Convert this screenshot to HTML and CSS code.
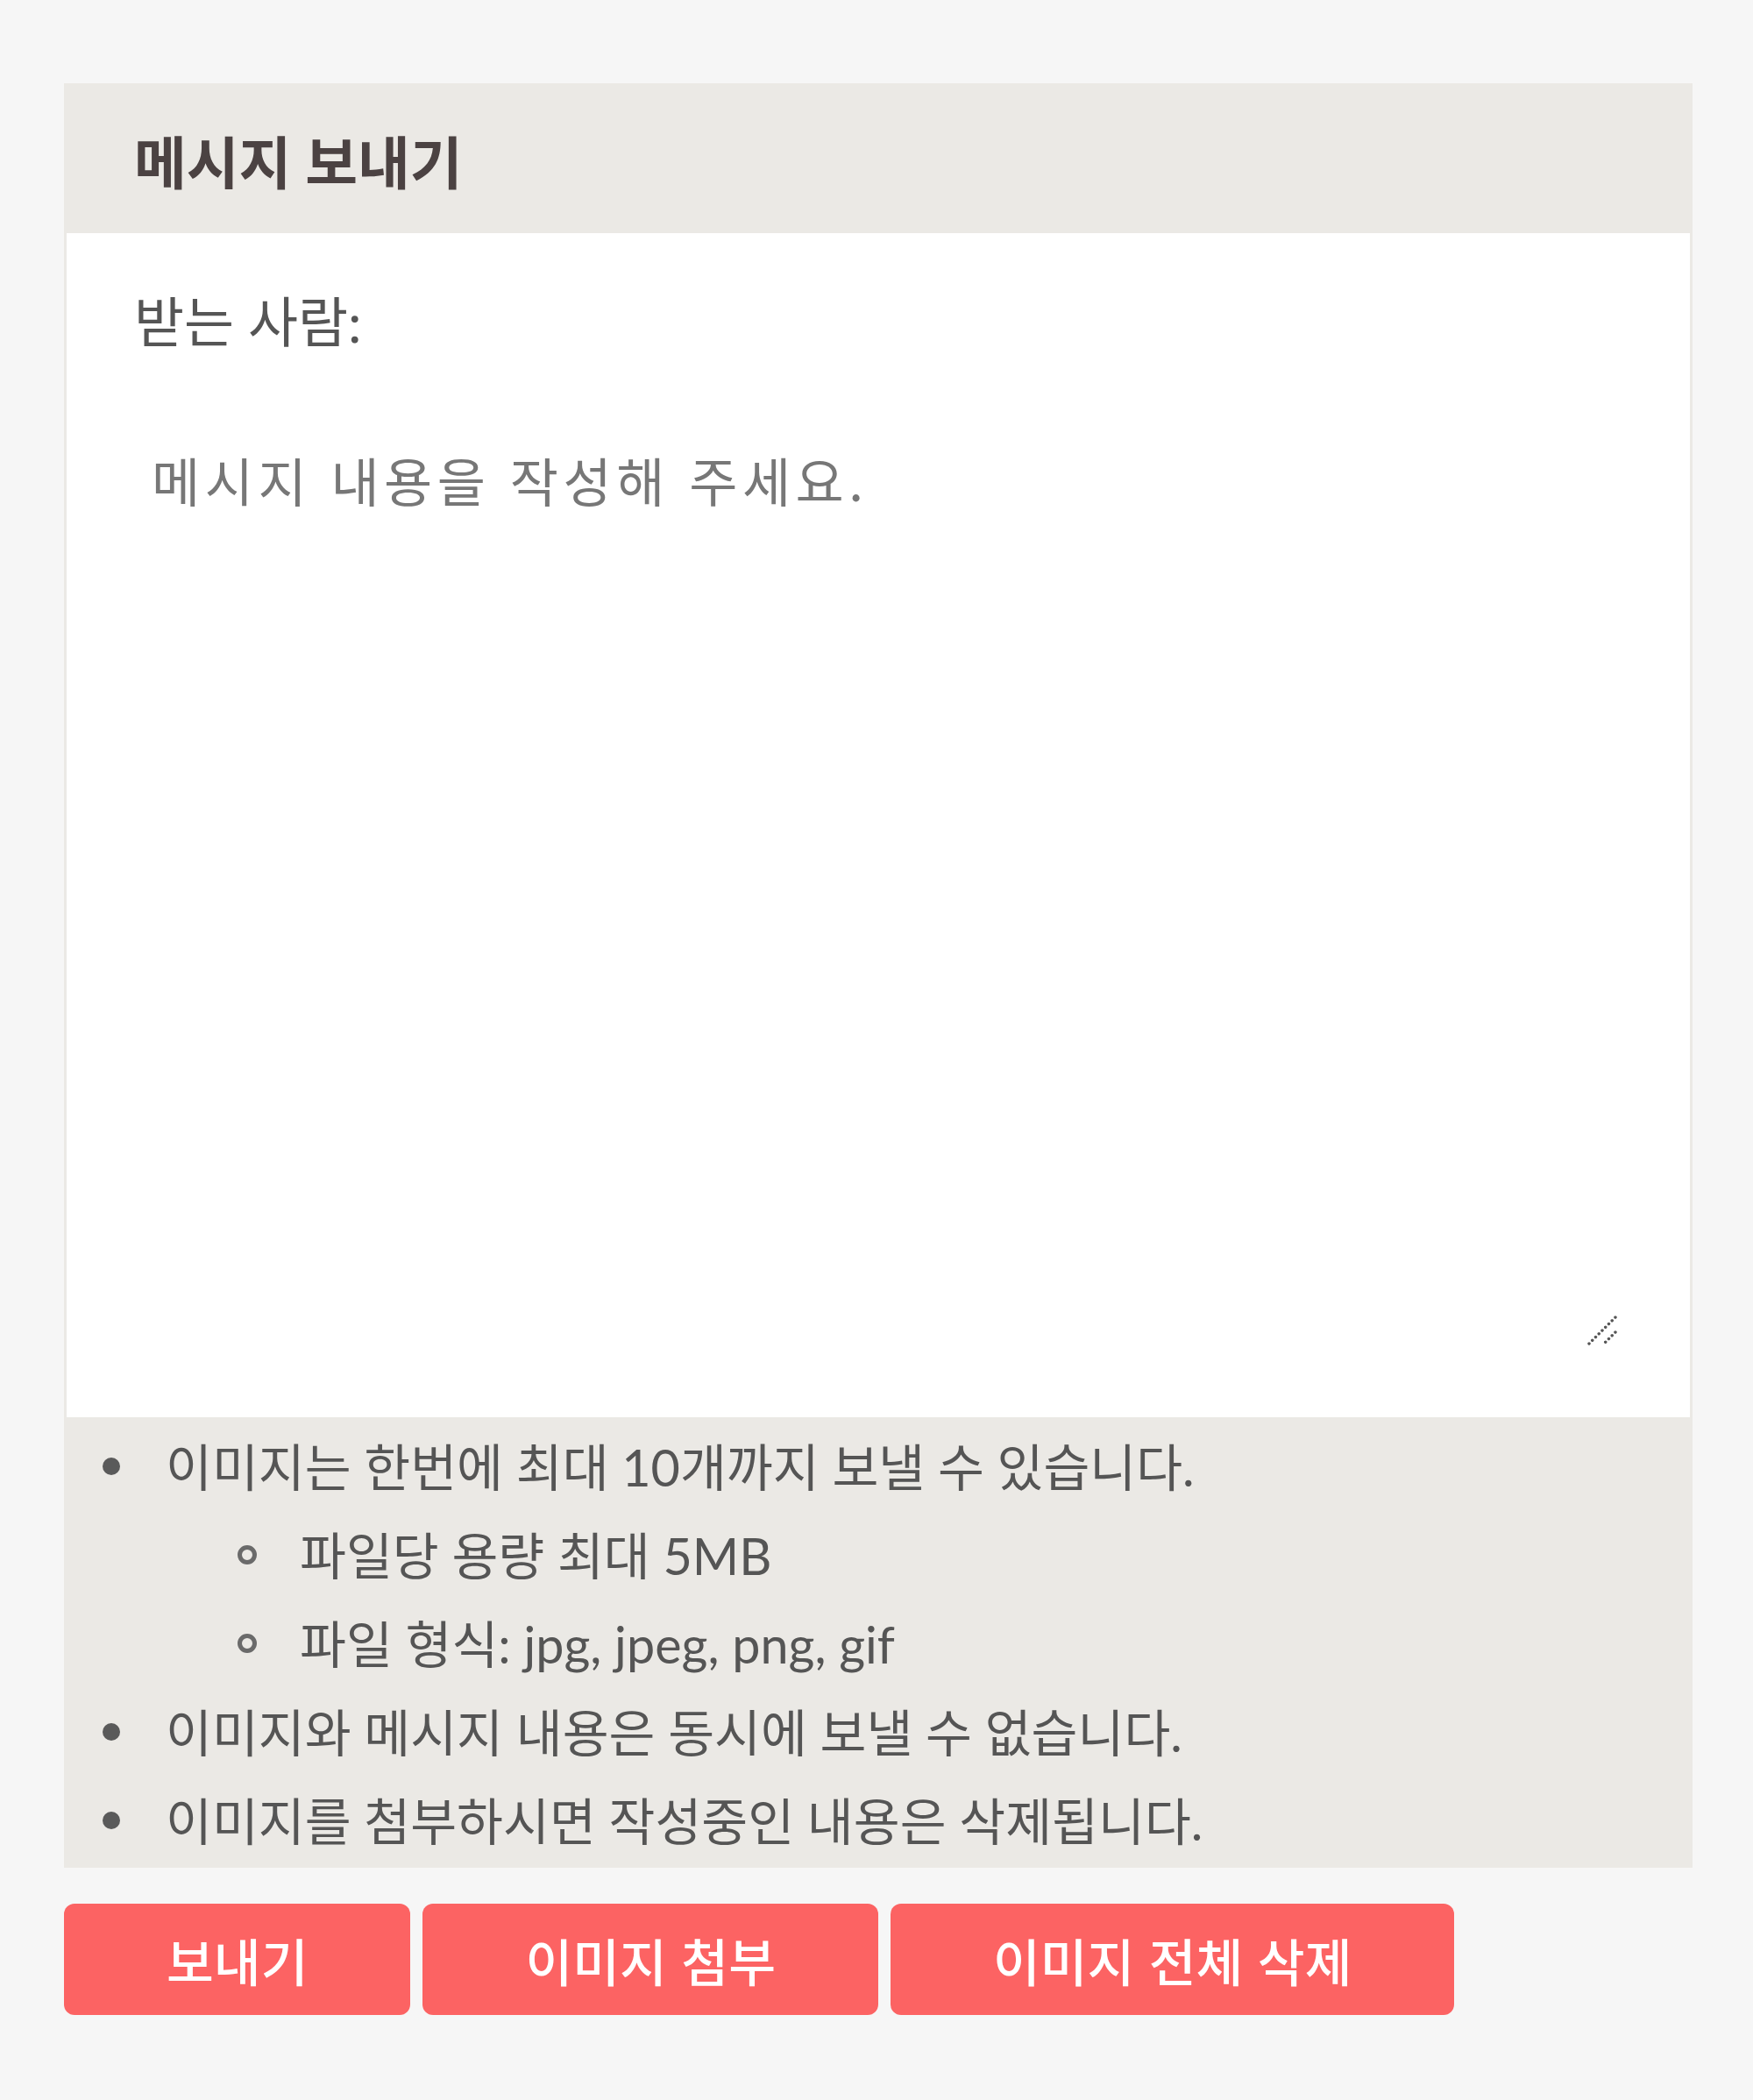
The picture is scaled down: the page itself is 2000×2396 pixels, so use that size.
FILE: index.html
```html
<!DOCTYPE html>
<html lang="ko">
<head>
  <meta charset="UTF-8" />
  <meta name="viewport" content="width=device-width, initial-scale=1.0"/>
  <title>메시지 보내기</title>
  <link rel="stylesheet" href="styles.css">
</head>
<body>
  <form class="message-form" id="messageForm">
    <div class="panel">
      <div class="panel-head">
        <h2>메시지 보내기</h2>
      </div>

      <div class="panel-body">
        <div class="receiver">받는 사람:</div>
        <div class="textarea-wrap">
          <textarea name="content" placeholder="메시지 내용을 작성해 주세요."></textarea>
          <svg class="grip" width="36" height="36" viewBox="0 0 36 36">
            <path d="M33 3 L3 33 M33 20 L20 33" stroke="#555" stroke-width="3.4" stroke-linecap="round" stroke-dasharray="0.1 5.2" fill="none"/>
          </svg>
        </div>
      </div>

      <ul class="notice">
        <li>이미지는 한번에 최대 10개까지 보낼 수 있습니다.
          <ul>
            <li>파일당 용량 최대 5MB</li>
            <li>파일 형식: jpg, jpeg, png, gif</li>
          </ul>
        </li>
        <li>이미지와 메시지 내용은 동시에 보낼 수 없습니다.</li>
        <li>이미지를 첨부하시면 작성중인 내용은 삭제됩니다.</li>
      </ul>
    </div>

    <div class="actions">
      <button type="submit" class="btn-send">보내기</button>
      <button type="button" class="btn-attach">이미지 첨부</button>
      <button type="button" class="btn-clear">이미지 전체 삭제</button>
    </div>
  </form>
</body>
</html>
```

FILE: styles.css
```css
body {
  margin: 0;
  padding: 95px 0 0 73px;
  background: #f6f6f6;
  font-family: Lato, "Noto Sans CJK KR", sans-serif;
  color: #555;
}
.panel {
  width: 1858px;
  box-sizing: border-box;
  border: 3px solid #ebe9e5;
  background: #ebe9e5;
}
.panel-head {
  height: 168px;
  display: flex;
  align-items: center;
  padding-left: 77px;
}
.panel-head h2 {
  margin: 0;
  font-size: 65px;
  font-weight: bold;
  color: #4b4242;
}
.panel-body {
  background: #fff;
  padding: 61px 77px 77px;
}
.receiver {
  font-size: 62px;
  line-height: 80px;
  color: #555;
}
.textarea-wrap {
  position: relative;
  margin-top: 80px;
}
.textarea-wrap textarea {
  display: block;
  width: 100%;
  height: 1053px;
  box-sizing: border-box;
  border: none;
  outline: none;
  resize: none;
  padding: 20px 20px;
  font-family: "Noto Sans CJK KR", sans-serif;
  font-size: 60px;
  line-height: 80px;
  letter-spacing: 5.5px;
  color: #555;
}
.textarea-wrap textarea::placeholder {
  color: #777;
}
.grip {
  position: absolute;
  right: 5px;
  bottom: 4px;
  pointer-events: none;
}
.notice {
  list-style: none;
  margin: 0;
  padding: 6px 0 0;
  font-size: 57.5px;
  line-height: 101px;
  color: #555;
}
.notice li {
  position: relative;
  padding-left: 113px;
}
.notice li::before {
  content: "";
  position: absolute;
  left: 41px;
  top: 40px;
  width: 20px;
  height: 20px;
  border-radius: 50%;
  background: #5a5a5a;
}
.notice ul {
  list-style: none;
  margin: 0;
  padding: 0;
}
.notice ul li {
  padding-left: 153px;
}
.notice ul li::before {
  left: 82px;
  top: 39px;
  box-sizing: border-box;
  width: 22px;
  height: 22px;
  background: none;
  border: 5px solid #6a6a6a;
}
.actions {
  display: flex;
  gap: 14px;
  margin-top: 41px;
}
.actions button {
  height: 127px;
  padding: 0 117px;
  border: none;
  border-radius: 12px;
  background: #fc6363;
  color: #fff;
  font-family: "Noto Sans CJK KR", sans-serif;
  font-size: 58.5px;
  font-weight: 500;
  cursor: pointer;
}
.actions button:hover {
  background: #f25454;
}
```
